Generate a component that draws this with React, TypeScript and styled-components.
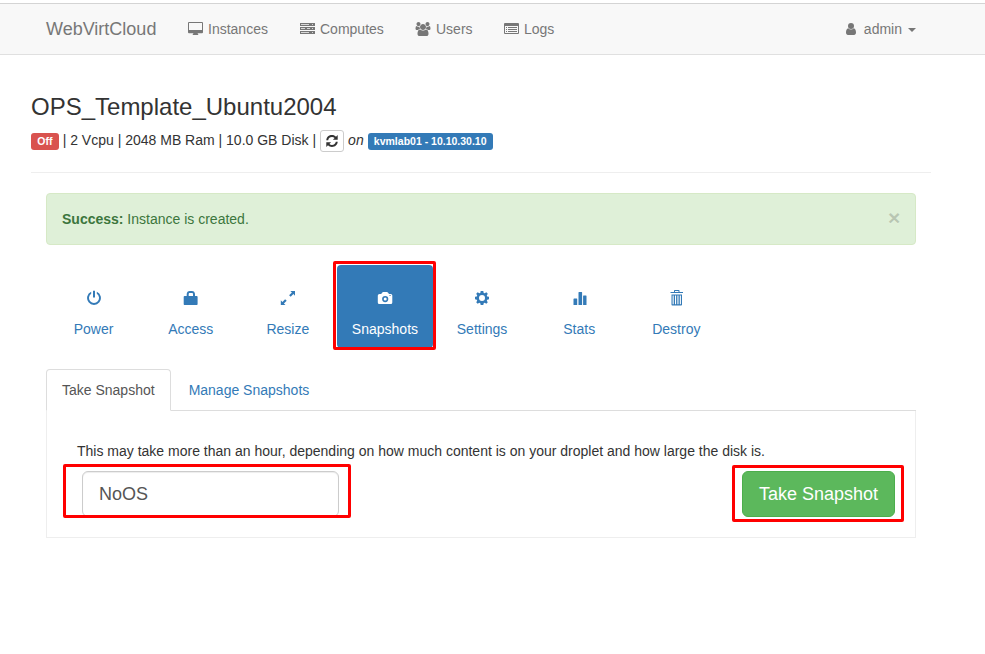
import React from 'react';
import styled, { createGlobalStyle, css } from 'styled-components';

const GlobalStyle = createGlobalStyle`
  * { box-sizing: border-box; }
  body {
    margin: 0;
    background: #fff;
    color: #333;
    font: 14px/20px "Liberation Sans", Arial, sans-serif;
  }
  button, input { font-family: inherit; }
`;

const Navbar = styled.nav`
  display: flex;
  align-items: center;
  height: 52px;
  margin-top: 3px;
  padding: 0 69px 0 46px;
  background: #f8f8f8;
  border-top: 1px solid #d4d4d4;
  border-bottom: 1px solid #e0e0e0;
  color: #777;
`;

const Brand = styled.a`
  width: 142px;
  font-size: 18px;
`;

const NavItem = styled.a<{ $width: number }>`
  display: flex;
  align-items: center;
  gap: 5px;
  width: ${(p) => p.$width}px;
`;

const UserMenu = styled.a`
  display: flex;
  align-items: center;
  margin-left: auto;
  gap: 6px;

  svg { margin-right: 1px; }
`;

const Caret = styled.span`
  margin-top: 1px;
  border: 4px solid transparent;
  border-top-color: #777;
  border-bottom: 0;
`;

const Icon = styled.svg`
  display: block;
  flex: none;
  fill: currentColor;
`;

const Page = styled.main`
  width: 900px;
  margin-left: 31px;
`;

const Header = styled.header`
  height: 118px;
  padding-top: 39px;
  border-bottom: 1px solid #eee;
`;

const Title = styled.h3`
  margin: 0;
  font-size: 24px;
  font-weight: 400;
  line-height: 26px;
`;

const Specs = styled.div`
  display: flex;
  align-items: center;
  margin-top: 9px;
  height: 22px;
  white-space: pre;
`;

const Label = styled.span<{ $tone: string }>`
  height: 17px;
  margin-top: 3px;
  padding: 0 6.3px;
  border-radius: 3px;
  background: ${(p) => p.$tone};
  color: #fff;
  font-size: 10.5px;
  font-weight: 700;
  line-height: 17px;
`;

const RefreshButton = styled.button`
  display: grid;
  place-items: center;
  width: 24px;
  height: 22px;
  margin: 1px 4px 0;
  padding: 0;
  border: 1px solid #ccc;
  border-radius: 3px;
  background: #fff;
  color: #333;
`;

const Content = styled.div`
  padding: 20px 15px 0;
`;

const Alert = styled.div`
  display: flex;
  align-items: center;
  justify-content: space-between;
  height: 52px;
  padding: 0 15px;
  border: 1px solid #d6e9c6;
  border-radius: 4px;
  background: #dff0d8;
  color: #3c763d;
`;

const Close = styled.button`
  width: 12px;
  margin: -3px 0 0;
  padding: 0;
  border: 0;
  background: none;
  color: #000;
  font-size: 21px;
  font-weight: 700;
  line-height: 21px;
  text-shadow: 0 1px 0 #fff;
  opacity: 0.17;
`;

const Pills = styled.div`
  display: flex;
  gap: 1.14px;
  margin-top: 20px;
  margin-left: -0.43px;
`;

const Pill = styled.div<{ $active?: boolean }>`
  position: relative;
  display: flex;
  flex-direction: column;
  align-items: center;
  gap: 13px;
  width: 96px;
  height: 83px;
  padding-top: 25px;
  border-radius: 4px;
  color: #337ab7;
  ${(p) => p.$active && css`
    background: #337ab7;
    color: #fff;
  `}
`;

const Highlight = styled.span<{ $top: number; $right: number; $bottom: number; $left: number }>`
  position: absolute;
  top: ${(p) => -p.$top}px;
  right: ${(p) => -p.$right}px;
  bottom: ${(p) => -p.$bottom}px;
  left: ${(p) => -p.$left}px;
  border: 3px solid #f00;
  border-radius: 2px;
  pointer-events: none;
`;

const Tabs = styled.div`
  display: flex;
  height: 42px;
  margin-top: 21px;
  border-bottom: 1px solid #ddd;
`;

const Tab = styled.a<{ $active?: boolean }>`
  height: 42px;
  margin-right: 2px;
  padding: 10px 15px;
  border: 1px solid transparent;
  border-radius: 4px 4px 0 0;
  color: #337ab7;
  ${(p) => p.$active && css`
    border-color: #ddd #ddd transparent;
    background: #fff;
    color: #555;
  `}
`;

const Panel = styled.section`
  height: 127px;
  padding: 30px 20px 0 30px;
  border: 1px solid #eee;
  border-top: 0;
`;

const Note = styled.p`
  margin: 0;
`;

const FormRow = styled.div`
  display: flex;
  justify-content: space-between;
  margin-top: 10px;
  padding-left: 5px;
`;

const Field = styled.div`
  position: relative;
  height: 46px;
`;

const NameInput = styled.input`
  display: block;
  width: 257px;
  height: 46px;
  padding: 10px 16px;
  border: 1px solid #ccc;
  border-radius: 6px;
  background: #fff;
  box-shadow: inset 0 1px 1px rgba(0, 0, 0, 0.075);
  color: #555;
  font-size: 18px;
  line-height: 24px;
`;

const SubmitButton = styled.button`
  display: block;
  width: 153px;
  height: 46px;
  padding: 0;
  border: 1px solid #4cae4c;
  border-radius: 6px;
  background: #5cb85c;
  color: #fff;
  font-size: 18px;
  line-height: 24px;
`;

const DesktopIcon = () => (
  <Icon width="15" height="14" viewBox="0 0 15 14">
    <path fillRule="evenodd" d="M1 0h13a1 1 0 0 1 1 1v9.200a1 1 0 0 1-1 1H9.500l.8 1.300v.5H4.700v-.5l.8-1.300H1a1 1 0 0 1-1-1V1a1 1 0 0 1 1-1zM1 1v7h13V1z" />
  </Icon>
);

const ServerIcon = () => (
  <Icon width="15" height="12" viewBox="0 0 15 12">
    <path d="M0 0h15v3H0zM0 4h15v3H0zM0 8h15v3H0z" />
    <path fill="#f8f8f8" fillOpacity="0.75" d="M1 1h8v1H1zM12 1h1v1h-1zM1 5h4v1H1zM7 5h3v1H7zM12 5h1v1h-1zM1 9h8v1H1zM12 9h1v1h-1z" />
  </Icon>
);

const UsersIcon = () => (
  <Icon width="16" height="14" viewBox="0 0 1920 1792">
    <path d="M593 896q-162 5-265 128H194q-82 0-138-40.500T0 865q0-353 124-353 6 0 43.500 21t97.500 42.500T384 597q67 0 133-23-5 37-5 66 0 139 81 256zm1071 637q0 120-73 189.500t-194 69.500H523q-121 0-194-69.500T256 1533q0-53 3.500-103.500t14-109T300 1212t43-97.500 62-81 85.500-53.500T602 960q10 0 43 21.500t73 48 107 48 135 21.500 135-21.500 107-48 73-48 43-21.500q61 0 111.500 20t85.500 53.500 62 81 43 97.500 26.500 108.500 14 109 3.500 103.500zM640 256q0 106-75 181t-181 75-181-75-75-181 75-181T384 0t181 75 75 181zm704 384q0 159-112.500 271.500T960 1024 688.500 911.500 576 640t112.500-271.500T960 256t271.500 112.500T1344 640zm576 225q0 78-56 118.500t-138 40.500h-134q-103-123-265-128 81-117 81-256 0-29-5-66 66 23 133 23 59 0 119-21.500t97.500-42.500 43.500-21q124 0 124 353zm-128-609q0 106-75 181t-181 75-181-75-75-181 75-181 181-75 181 75 75 181z" />
  </Icon>
);

const ListIcon = () => (
  <Icon width="15" height="12" viewBox="0 0 15 12">
    <path fillRule="evenodd" d="M1 0h13a1 1 0 0 1 1 1v9a1 1 0 0 1-1 1H1a1 1 0 0 1-1-1V1a1 1 0 0 1 1-1zM1 3v7h13V3z" />
    <path d="M2 4h1v1H2zM4 4h9v1H4zM2 6h1v1H2zM4 6h9v1H4zM2 8h1v1H2zM4 8h9v1H4z" />
  </Icon>
);

const UserIcon = () => (
  <Icon width="12" height="12" viewBox="0 0 12 12">
    <path d="M3.300 5.300C4 6.100 4.900 6.500 6 6.500s2-.4 2.700-1.200c1.600.3 2.300 2.100 2.300 4.200 0 1.500-.8 2.500-2 2.500H3c-1.200 0-2-1-2-2.500 0-2.100.7-3.900 2.300-4.200z" />
    <circle cx="6" cy="3" r="3" />
  </Icon>
);

const RefreshIcon = () => (
  <Icon width="14" height="14" viewBox="0 0 14 14">
    <path d="M1.300 6.300C1.500 3 4 1.100 7 1.100c1.600 0 3 .6 4 1.600L12.700 1v4.800H7.900l1.700-1.700C8.900 3.400 8 3.100 7 3.100c-2 0-3.500 1.200-3.800 3.200zM12.700 7.700c-.2 3.300-2.700 5.200-5.700 5.200-1.600 0-3-.6-4-1.600L1.300 13V8.200h4.800L4.400 9.900c.7.700 1.600 1 2.600 1 2 0 3.500-1.200 3.800-3.200z" />
  </Icon>
);

const PillIcon = ({ children }: { children: React.ReactNode }) => (
  <Icon width="16" height="16" viewBox="0 0 16 16">{children}</Icon>
);

const pills = [
  {
    name: 'Power',
    icon: <path d="M7 .8h2v6.700H7zM5.200 1.700v2.100a5 5 0 1 0 5.600 0V1.700a6.900 6.900 0 1 1-5.600 0z" />,
  },
  {
    name: 'Access',
    icon: <path fillRule="evenodd" d="M3.700 6V4.300C3.700 2.200 5 1 6.800 1h2.100C10.700 1 12 2.200 12 4.300V6h1.700c.5 0 .9.300.9.800V14c0 .6-.4 1-1 1h-12c-.5 0-.9-.4-.9-1V6.800c0-.5.4-.8.900-.8zM5.700 6H10V4.300C10 3.300 9.600 2.900 8.900 2.900H6.800c-.7 0-1.100.4-1.100 1.400z" />,
  },
  {
    name: 'Resize',
    icon: <path d="M10.300 1H15v4.700l-1.600-1.600-2.700 2.700-1.600-1.600 2.800-2.700zM.8 10.300l1.600 1.600L5.100 9.200l1.600 1.600-2.800 2.700L5.500 15H.8z" />,
  },
  {
    name: 'Snapshots',
    icon: <><path fillRule="evenodd" d="M2.500 4h1.700l1.100-1.500Q5.700 2 6.300 2h3.600q.6 0 1 .5L12 4h1.800q1.500 0 1.500 1.500v7q0 1.500-1.500 1.500H2.300Q.8 14 .8 12.500v-7Q.8 4 2.500 4zM8.200 6a3.100 3.100 0 1 0 0 6.200 3.100 3.100 0 0 0 0-6.200zM12.500 5v1.100h1.100V5z" /><path fillRule="evenodd" d="M8.200 7.600a1.500 1.500 0 1 0 0 3 1.500 1.500 0 0 0 0-3z" /></>,
  },
  {
    name: 'Settings',
    icon: <path fillRule="evenodd" d="M6.700 1h2.600l.4 1.900 1 .4 1.600-1 1.500 1.500-1 1.600.4 1 1.800.4v2.500l-1.800.4-.4 1 1 1.600-1.500 1.500-1.600-1-1 .4-.4 1.800H6.700l-.4-1.800-1-.4-1.600 1-1.500-1.500 1-1.600-.4-1L1 9.300V6.800l1.800-.4.4-1-1-1.600 1.500-1.500 1.600 1 1-.4zM8 5a3 3 0 1 0 0 6 3 3 0 0 0 0-6z" />,
  },
  {
    name: 'Stats',
    icon: <path d="M3.200 8.500h2.600q.4 0 .4.500v6H2.500V9q0-.5.700-.5zM8 2h2.600q.5 0 .5.500V15H7.500V2.500Q7.500 2 8 2zM12.500 5.500H15q.5 0 .5.500v9h-3.400V6q0-.5.400-.5z" />,
  },
  {
    name: 'Destroy',
    icon: <path fillRule="evenodd" d="M6.800 0h3.900q.8 0 .8.800V2H15v1H2.500V2H6V.8Q6 0 6.800 0zM7 1v1h3.500V1zM3.500 4.500H14v10.200q0 .8-.8.800H4.300q-.8 0-.8-.8zM4.600 5.500v8.800h1.100V5.500zm2.400 0v8.800h1.100V5.500zm2.400 0v8.800h1.100V5.500zm2.400 0v8.800h1.100V5.500z" />,
  },
];

export default function App() {
  return (
    <>
      <GlobalStyle />
      <Navbar>
        <Brand>WebVirtCloud</Brand>
        <NavItem $width={112}><DesktopIcon />Instances</NavItem>
        <NavItem $width={115}><ServerIcon />Computes</NavItem>
        <NavItem $width={89}><UsersIcon />Users</NavItem>
        <NavItem $width={60}><ListIcon />Logs</NavItem>
        <UserMenu><UserIcon />admin<Caret /></UserMenu>
      </Navbar>
      <Page>
        <Header>
          <Title>OPS_Template_Ubuntu2004</Title>
          <Specs>
            <Label $tone="#d9534f">Off</Label>
            <span> | 2 Vcpu | 2048 MB Ram | 10.0 GB Disk |</span>
            <RefreshButton aria-label="Refresh"><RefreshIcon /></RefreshButton>
            <em>on </em>
            <Label $tone="#337ab7">kvmlab01 - 10.10.30.10</Label>
          </Specs>
        </Header>
        <Content>
          <Alert>
            <span><strong>Success:</strong> Instance is created.</span>
            <Close>×</Close>
          </Alert>
          <Pills>
            {pills.map(({ name, icon }) => (
              <Pill key={name} $active={name === 'Snapshots'}>
                <PillIcon>{icon}</PillIcon>
                <span>{name}</span>
                {name === 'Snapshots' && <Highlight $top={4} $right={3} $bottom={2} $left={4} />}
              </Pill>
            ))}
          </Pills>
          <Tabs>
            <Tab $active>Take Snapshot</Tab>
            <Tab>Manage Snapshots</Tab>
          </Tabs>
          <Panel>
            <Note>This may take more than an hour, depending on how much content is on your droplet and how large the disk is.</Note>
            <FormRow>
              <Field>
                <NameInput defaultValue="NoOS" aria-label="Snapshot name" />
                <Highlight $top={7} $right={12} $bottom={1} $left={19} />
              </Field>
              <Field>
                <SubmitButton>Take Snapshot</SubmitButton>
                <Highlight $top={6} $right={9} $bottom={5} $left={10} />
              </Field>
            </FormRow>
          </Panel>
        </Content>
      </Page>
    </>
  );
}
